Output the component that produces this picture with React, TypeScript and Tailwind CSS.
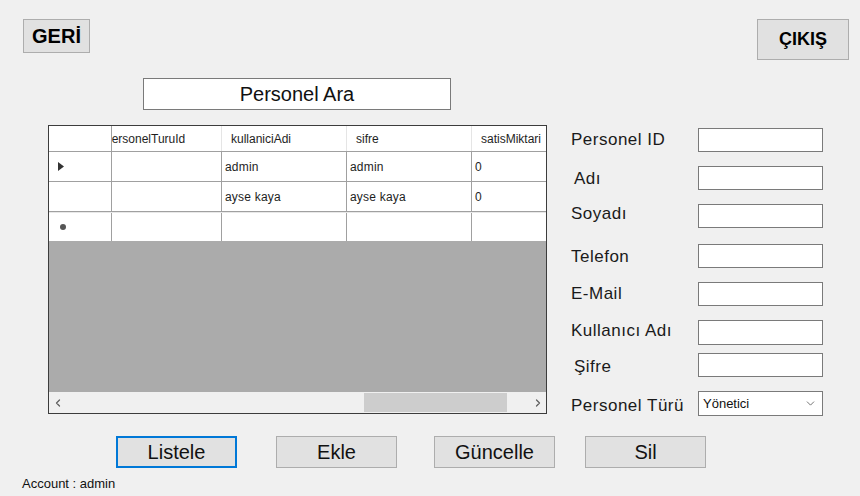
import { ChevronDown, ChevronLeft, ChevronRight } from 'lucide-react'

const font = { fontFamily: '"Liberation Sans", Arial, sans-serif' }

const columns = [
  { key: 'personelTuruId', label: 'personelTuruId', width: 110, shift: true },
  { key: 'kullaniciAdi', label: 'kullaniciAdi', width: 125 },
  { key: 'sifre', label: 'sifre', width: 125 },
  { key: 'satisMiktari', label: 'satisMiktari', width: 75 },
]

const rows = [
  { current: true, personelTuruId: '', kullaniciAdi: 'admin', sifre: 'admin', satisMiktari: '0' },
  { current: false, personelTuruId: '', kullaniciAdi: 'ayse kaya', sifre: 'ayse kaya', satisMiktari: '0' },
]

const fields = [
  { label: 'Personel ID', mt: 'mt-[4px]', lx: '', ly: '' },
  { label: 'Adı', mt: 'mt-[14px]', lx: 'pl-[3px]', ly: 'translate-y-[1px]' },
  { label: 'Soyadı', mt: 'mt-[14px]', lx: '', ly: '-translate-y-[2px]' },
  { label: 'Telefon', mt: 'mt-[16px]', lx: '', ly: 'translate-y-[1px]' },
  { label: 'E-Mail', mt: 'mt-[14px]', lx: '', ly: '' },
  { label: 'Kullanıcı Adı', mt: 'mt-[14px]', lx: '', ly: '-translate-y-[2px]' },
  { label: 'Şifre', mt: 'mt-[8px]', lx: 'pl-[3px]', ly: 'translate-y-[2px]' },
]

function DataGrid() {
  return (
    <div className="w-[499px] h-[289px] border border-[#3c3c3c] bg-[#ababab] flex flex-col overflow-hidden">
      {/* header */}
      <div className="flex h-[26px] bg-white border-b border-[#a0a0a0] text-[12px] text-[#1e1e1e]">
        <div className="w-[63px] shrink-0 border-r border-[#a0a0a0]" />
        {columns.map((c) => (
          <div
            key={c.key}
            style={{ width: c.width }}
            className="shrink-0 border-r border-[#e5e5e5] flex items-center overflow-hidden whitespace-nowrap"
          >
            <span className={c.shift ? '-ml-[7px]' : 'pl-[9px]'}>{c.label}</span>
          </div>
        ))}
      </div>
      {rows.map((r, i) => (
        <div key={i} className="flex h-[30px] bg-white border-b border-[#a0a0a0] text-[12px] text-[#1e1e1e]">
          <div className="w-[63px] shrink-0 border-r border-[#a0a0a0] flex items-center pl-[9px]">
            {r.current && (
              <svg width="6" height="9" viewBox="0 0 6 9">
                <path d="M0 0 L6 4.5 L0 9 Z" fill="#333" />
              </svg>
            )}
          </div>
          {columns.map((c) => (
            <div
              key={c.key}
              style={{ width: c.width }}
              className="shrink-0 border-r border-[#a0a0a0] flex items-center pl-[3px] overflow-hidden whitespace-nowrap tracking-[0.2px]"
            >
              {r[c.key as keyof typeof r] as string}
            </div>
          ))}
        </div>
      ))}
      <div className="flex h-[29px] bg-white border-t border-[#e8e8e8]">
        <div className="w-[63px] shrink-0 border-r border-[#a0a0a0] flex items-center pl-[11px]">
          <span className="w-[6px] h-[6px] rounded-full bg-[#555]" />
        </div>
        {columns.map((c) => (
          <div key={c.key} style={{ width: c.width }} className="shrink-0 border-r border-[#a0a0a0]" />
        ))}
      </div>
      <div className="flex-1" />
      {/* horizontal scrollbar */}
      <div className="h-[21px] bg-[#f0f0f0] flex items-center">
        <div className="w-[17px] flex justify-center text-[#606060]">
          <ChevronLeft size={12} strokeWidth={2.5} />
        </div>
        <div className="flex-1 h-full flex items-center">
          <div className="ml-[298px] w-[143px] h-[19px] bg-[#cdcdcd]" />
        </div>
        <div className="w-[17px] flex justify-center text-[#606060]">
          <ChevronRight size={12} strokeWidth={2.5} />
        </div>
      </div>
    </div>
  )
}

function FormButton({ label, className = '', focused = false }: { label: string; className?: string; focused?: boolean }) {
  return (
    <button
      className={`w-[121px] h-[32px] bg-[#e1e1e1] text-[20px] text-[#111] flex items-center justify-center ${
        focused ? 'border-2 border-[#0078d7]' : 'border border-[#adadad]'
      } ${className}`}
    >
      {label}
    </button>
  )
}

export default function App() {
  return (
    <div style={font} className="w-[860px] h-[496px] bg-[#f0f0f0] overflow-hidden text-black">
      <div className="flex justify-between items-start pt-[19px] pl-[23px] pr-[11px]">
        <button className="w-[67px] h-[34px] bg-[#e1e1e1] border border-[#adadad] text-[20px] font-bold flex items-center justify-center">
          GERİ
        </button>
        <button className="w-[92px] h-[41px] bg-[#e1e1e1] border border-[#adadad] text-[18px] font-bold flex items-center justify-center">
          ÇIKIŞ
        </button>
      </div>

      <div className="ml-[143px] mt-[18px] w-[308px] h-[32px] bg-white border border-[#7a7a7a] flex items-center justify-center text-[20px] text-[#111]">
        Personel Ara
      </div>

      <div className="flex mt-[14px] h-[292px]">
        <div className="ml-[48px] mt-px">
          <DataGrid />
        </div>
        <div className="ml-[24px] flex flex-col">
          {fields.map((f) => (
            <div key={f.label} className={`flex items-center ${f.mt}`}>
              <div
                className={`w-[127px] text-[17px] leading-[20px] tracking-[0.5px] text-[#1a1a1a] whitespace-nowrap ${f.lx} ${f.ly}`}
              >
                {f.label}
              </div>
              <div
                className={`w-[125px] ${f.label === 'Kullanıcı Adı' ? 'h-[25px]' : 'h-[24px]'} bg-white border border-[#7a7a7a]`}
              />
            </div>
          ))}
          <div className="flex items-center mt-[14px]">
            <div className="w-[127px] text-[17px] leading-[20px] tracking-[0.5px] text-[#1a1a1a] whitespace-nowrap translate-y-[2px]">
              Personel Türü
            </div>
            <div className="w-[125px] h-[25px] bg-white border border-[#7a7a7a] flex items-center justify-between pl-[4px] pr-[5px] text-[13px] text-[#111]">
              <span>Yönetici</span>
              <ChevronDown size={13} strokeWidth={1.5} className="text-[#555]" />
            </div>
          </div>
        </div>
      </div>

      <div className="flex mt-[20px] pl-[116px]">
        <FormButton label="Listele" focused />
        <FormButton label="Ekle" className="ml-[39px]" />
        <FormButton label="Güncelle" className="ml-[37px]" />
        <FormButton label="Sil" className="ml-[30px]" />
      </div>

      <div className="ml-[22px] mt-[6px] text-[13px] text-[#111]">Account : admin</div>
    </div>
  )
}
